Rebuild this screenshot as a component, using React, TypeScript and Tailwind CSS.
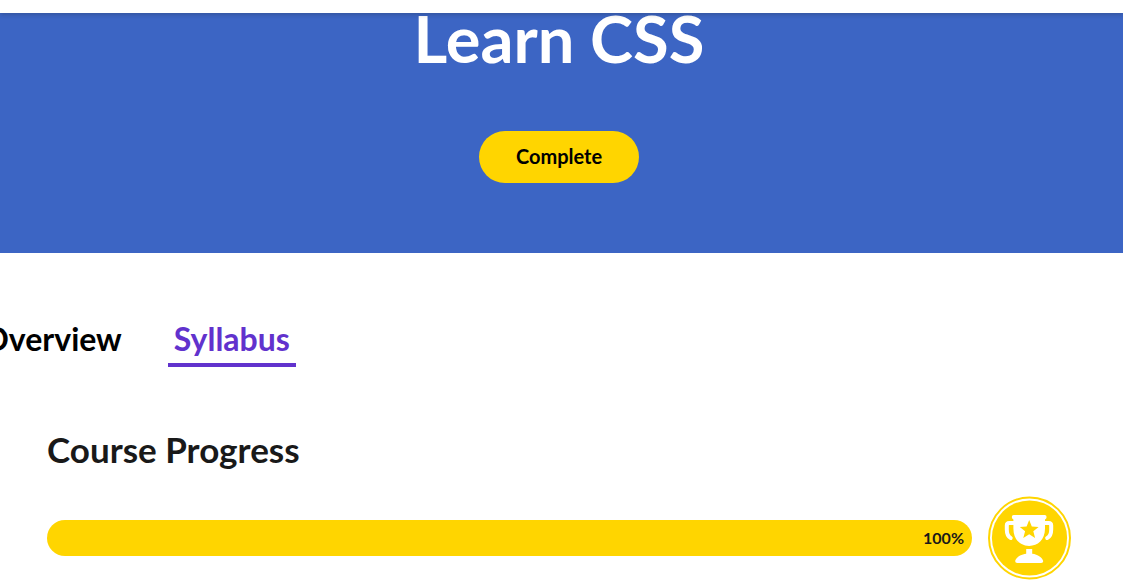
import React from "react";

function TrophyBadge() {
  return (
    <svg viewBox="0 0 83 83" className="h-[84px] w-[83px] shrink-0" role="img" aria-label="Course completed">
      <circle cx="41.5" cy="41.5" r="40.5" fill="#fff" stroke="#ffd500" strokeWidth="2" />
      <circle cx="41.5" cy="41.5" r="37.6" fill="#ffd500" />
      <g transform="translate(-0.8 0)">
        <g fill="none" stroke="#fff" strokeWidth="4" strokeLinecap="round" strokeLinejoin="round">
          <path d="M27 26.500H22Q19.600 26.500 19.600 29V33Q19.600 39.500 23.500 41.500" />
          <path d="M57 26.500H61.500Q64 26.500 64 29V33Q64 39.500 60 41.500" />
        </g>
        <path
          fill="#fff"
          d="M26.500 18.500H57.500Q59.400 18.500 59.400 20.500Q59.400 22.300 57.800 23V32C57.800 43.500 50.500 49.400 42 49.400S26.200 43.500 26.200 32V23Q24.600 22.300 24.600 20.500Q24.600 18.500 26.500 18.500Z"
        />
        <path fill="#ffd500" d="M42 23.500L44.600 30.100L51.400 30.500L46.100 34.800L47.900 41.600L42 37.800L36.100 41.600L37.900 34.800L32.600 30.500L39.400 30.100Z" />
        <path
          fill="#fff"
          d="M39 52.500H45V57.200C50.500 57.800 55.600 61.200 56 64.600Q56.100 66.600 54 66.600H30Q27.900 66.600 28 64.600C28.400 61.200 33.500 57.800 39 57.200Z"
        />
      </g>
    </svg>
  );
}

export default function App() {
  return (
    <div className="min-h-screen overflow-x-hidden bg-white font-['Lato','Noto_Sans',sans-serif]">
      <header className="relative z-10 h-[13px] bg-white shadow-[0_2px_4px_rgba(25,25,25,0.2)]" />

      <section className="flex flex-col items-center bg-[#3c65c4] pr-[5px] pb-[70px]">
        <h1 className="text-[65px] leading-[50px] font-bold text-white">Learn CSS</h1>
        <button
          type="button"
          className="mt-[68px] h-[52px] w-40 rounded-full bg-[#ffd500] pb-[2px] text-[20px] leading-6 font-bold text-black"
        >
          Complete
        </button>
      </section>

      <main className="pr-[5px]">
        <div className="mx-auto max-w-[1024px]">
          <nav aria-label="Course sections" className="-ml-[70px] flex gap-10 pt-16 text-[32px] leading-10 font-bold">
            <a href="#overview" className="border-b-4 border-transparent px-[6px] pt-[2px] pb-1 text-black">
              Overview
            </a>
            <a
              href="#syllabus"
              aria-current="page"
              className="border-b-4 border-[#6132cd] px-[6px] pt-[2px] pb-1 text-[#6132cd]"
            >
              Syllabus
            </a>
          </nav>

          <section id="syllabus" className="pt-[60px]">
            <h2 className="text-[35px] leading-[44px] font-bold text-[#191919]">Course Progress</h2>
            <div className="mt-[25px] flex items-center gap-4">
              <div
                role="progressbar"
                aria-label="Course progress"
                aria-valuenow={100}
                aria-valuemin={0}
                aria-valuemax={100}
                className="flex h-9 flex-1 items-center justify-end rounded-full bg-[#ffd500] pr-2 text-base font-bold text-[#191919]"
              >
                100%
              </div>
              <TrophyBadge />
            </div>
          </section>
        </div>
      </main>
    </div>
  );
}
